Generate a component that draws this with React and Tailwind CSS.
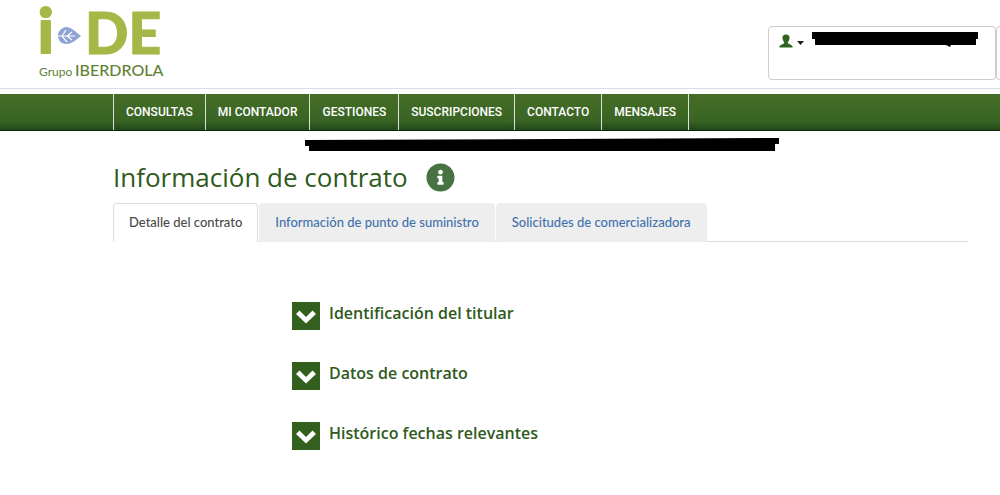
import { useState } from 'react'
import { FaInfoCircle } from 'react-icons/fa'
import clsx from 'clsx'

const MENU = ['CONSULTAS', 'MI CONTADOR', 'GESTIONES', 'SUSCRIPCIONES', 'CONTACTO', 'MENSAJES']
const TABS = ['Detalle del contrato', 'Información de punto de suministro', 'Solicitudes de comercializadora']
const SECTIONS = ['Identificación del titular', 'Datos de contrato', 'Histórico fechas relevantes']

export default function App() {
  return (
    <div className="min-h-screen bg-white font-['Trebuchet_MS','Open_Sans',sans-serif] text-[#2f5a1c]">
      <Header />
      <MainMenu />
      <main className="pr-8 pl-[113px]">
        <HolderName />
        <div className="flex items-center gap-[18px]">
          <h1 className="text-[26px] leading-10">Información de contrato</h1>
          <button aria-label="Ayuda"><FaInfoCircle className="size-[29px] text-[#477343]" /></button>
        </div>
        <ContractTabs />
        <div className="mt-[60px] ml-[179px] space-y-8">
          {SECTIONS.map((s) => <Section key={s} title={s} />)}
        </div>
      </main>
    </div>
  )
}

function Header() {
  return (
    <header className="flex justify-between border-b border-[#dedbe3] pb-2">
      <Logo />
      <div className="mt-[26px] flex">
        <div className="h-[54px] w-[228px] rounded border border-[#d2c9cf] pt-1 pl-[10px]">
          <button className="flex items-start" aria-label="Usuario">
            <UserIcon />
            <svg viewBox="0 0 7 4" className="mt-[10px] ml-1 h-1 w-[7px]"><path d="M0 0h7L3.5 4z" fill="#222" /></svg>
            <svg viewBox="0 0 167 17" className="ml-2 h-[17px] w-[167px]">
              <path d="M0 1h166v7h-2v6h-25l-1 2-4-2H3V8H0z" fill="#000" />
            </svg>
          </button>
        </div>
        <div className="w-1 rounded-l border border-r-0 border-[#d2c9cf]" />
      </div>
    </header>
  )
}

function Logo() {
  return (
    <svg viewBox="0 0 180 80" className="h-20 w-[180px]" role="img" aria-label="i-DE Grupo Iberdrola">
      <g fill="#a5b847" stroke="#a5b847" strokeLinejoin="round" fontFamily="Lato" fontWeight="900">
        <text x="38" y="53" fontSize="60" strokeWidth="2">i</text>
        <text x="85" y="54" fontSize="57" strokeWidth="1">DE</text>
      </g>
      <path d="M81 36c-6 5-10 8-15 8-5 0-8-4-8-8.500s4-8 8-8.500c5 0 9 4 15 9z" fill="#8da3d3" />
      <path d="M57 36h18M62 36l4-6M67 36l5-4M62 36l5 6M67 36l5 4" stroke="#fff" strokeWidth="1.200" fill="none" />
      <g fontFamily="Lato">
        <text x="39" y="76" fontSize="12" fill="#5e8039">Grupo</text>
        <text x="75" y="76" fontSize="16" fontWeight="500" fill="#5f8232">IBERDROLA</text>
      </g>
    </svg>
  )
}

function UserIcon() {
  return (
    <svg viewBox="0 0 14 14" className="mt-[3px] h-[14px] w-[14px]" fill="#2f6420">
      <path d="M7 .5C4.500.5 3.400 2 3.500 4c.1 2 .8 3.300 1.600 4 .2.900 0 1.500-.6 1.800C2.900 10.600.6 11.200.4 12.600V13.500h13.200v-.9c-.2-1.400-2.500-2-4.100-2.800-.6-.3-.8-.9-.6-1.800.8-.7 1.500-2 1.600-4 .1-2-1-3.500-3.500-3.500z" />
    </svg>
  )
}

function MainMenu() {
  return (
    <nav className="mt-[5px] flex border-b border-[#0e2408] bg-linear-to-b from-[#456d26] via-[#396424] via-75% to-[#214817] pl-[113px]">
      {MENU.map((item) => (
        <a
          key={item} href="#"
          className="border-l border-[#d9e3d3] px-3 font-['Roboto'] text-[12px] leading-9 font-medium text-white last:border-r"
        >
          {item}
        </a>
      ))}
    </nav>
  )
}

// Name and address of the holder, blacked out
function HolderName() {
  return (
    <svg viewBox="0 0 474 14" className="mt-[7px] mb-[5px] ml-48 h-[14px] w-[474px]">
      <path d="M0 2L474 0v6h-4v7H4V8H0z" fill="#000" />
    </svg>
  )
}

function ContractTabs() {
  const [active, setActive] = useState(0)
  return (
    <div role="tablist" className="mt-[6px] flex gap-px border-b border-[#ddd]">
      {TABS.map((tab, i) => (
        <button
          key={tab} role="tab" aria-selected={i === active}
          onClick={() => setActive(i)}
          className={clsx(
            "-mb-px rounded-t border px-[15px] font-['Lato'] text-[13px] leading-[37px] font-medium",
            i === active ? 'border-[#ddd] border-b-white bg-white text-[#4a4a4a]' : 'border-[#eee] bg-[#eee] text-[#3f72ac]',
          )}
        >
          {tab}
        </button>
      ))}
    </div>
  )
}

function Section({ title }) {
  return (
    <button className="flex items-start gap-[9px]">
      <span className="flex size-7 items-center justify-center bg-[#34601f]">
        <svg viewBox="0 0 20 14" className="mt-px h-[14px] w-5"><path d="M3.500 0.500L10 7l6.500-6.500L20 4 10 13.500 0 4z" fill="#fff" /></svg>
      </span>
      <span className="text-base leading-[22px] font-semibold">{title}</span>
    </button>
  )
}
